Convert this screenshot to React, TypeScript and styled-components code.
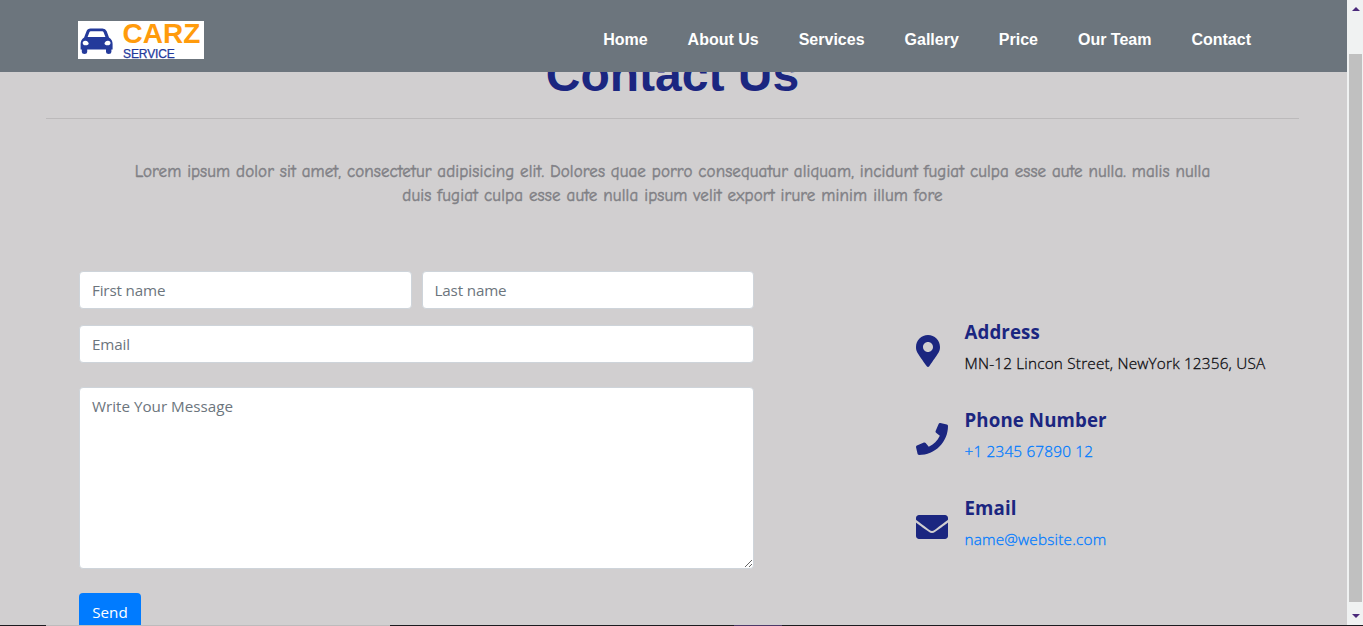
import React from "react";
import styled, { createGlobalStyle } from "styled-components";
import { FaMapMarkerAlt, FaPhone, FaEnvelope } from "react-icons/fa";

const GlobalStyle = createGlobalStyle`
  *, *::before, *::after { box-sizing: border-box; }
  body { margin: 0; overflow: hidden; font-family: "Open Sans", "Noto Sans", sans-serif; }
`;

const Window = styled.div`
  display: flex;
  flex-direction: column;
  width: 1363px;
  height: 626px;
  overflow: hidden;
  background: #d1cfd0;
`;

const Viewport = styled.div`
  display: flex;
  height: 625px;
`;

const Page = styled.div`
  position: relative;
  width: 1347px;
  height: 625px;
  overflow: hidden;
`;

const Header = styled.header`
  position: absolute;
  top: 0;
  left: 0;
  z-index: 2;
  display: flex;
  justify-content: space-between;
  align-items: center;
  width: 100%;
  height: 72px;
  padding: 8px 96px 0 78px;
  background: #6c757d;
`;

const Logo = styled.a`
  display: flex;
  width: 126px;
  height: 38px;
  padding: 0 0 0 2px;
  background: #fff;
`;

const CarMark = styled.svg`
  width: 34px;
  height: 28px;
  margin-top: 6px;
`;

const LogoText = styled.div`
  display: flex;
  flex-direction: column;
  margin-left: 8.5px;
  font-family: "Liberation Sans", sans-serif;
`;

const LogoName = styled.span`
  color: #ff9b0c;
  font-size: 28px;
  font-weight: bold;
  line-height: 25px;
`;

const LogoSub = styled.span`
  color: #243a9b;
  font-size: 12px;
  line-height: 16px;
  padding-left: 0.5px;
  letter-spacing: -0.1px;
  -webkit-text-stroke: 0.25px #243a9b;
`;

const Nav = styled.nav`
  display: flex;
  gap: 40px;
  font-family: "Liberation Sans", sans-serif;
  font-size: 16px;
  font-weight: bold;
`;

const NavLink = styled.a`
  color: #fff;
  line-height: 24px;
  white-space: nowrap;
  margin-top: -1px;
`;

const Main = styled.main`
  display: flex;
  flex-direction: column;
  padding: 47px 48px 0 46px;
`;

const Title = styled.h1`
  margin: 0;
  color: #1b2680;
  font: bold 48px/56px "Liberation Sans", sans-serif;
  text-align: center;
`;

const Rule = styled.hr`
  width: 100%;
  height: 1px;
  margin: 15px 0 0;
  border: 0;
  background: #bcbabb;
`;

const Intro = styled.p`
  margin: 41px 0 0;
  color: #808085;
  font-family: "Comic Neue", "Comic Sans MS", "Open Sans", sans-serif;
  font-size: 17px;
  line-height: 24px;
  text-align: center;
  -webkit-text-stroke: 0.45px #808085;
`;

const IntroLine = styled.span<{ $spacing: number }>`
  display: block;
  white-space: nowrap;
  letter-spacing: ${(p) => p.$spacing}px;
`;

const Columns = styled.div`
  display: flex;
  margin-top: 63px;
  padding-left: 33px;
`;

const Form = styled.form`
  display: flex;
  flex-direction: column;
  align-items: flex-start;
  width: 675px;
`;

const FieldRow = styled.div`
  display: flex;
  gap: 10px;
  width: 100%;
`;

const Input = styled.input<{ $top?: number }>`
  display: block;
  flex: 1;
  width: 100%;
  min-width: 0;
  min-height: 38px;
  margin: ${(p) => p.$top ?? 0}px 0 0;
  padding: 6px 12px;
  border: 1px solid #ced4da;
  border-radius: 4px;
  background: #fff;
  font: 15.2px/24px "Open Sans", sans-serif;
  letter-spacing: -0.15px;
  outline: none;
  &::placeholder { color: #6c757d; opacity: 1; }
`;

const Message = styled.textarea`
  display: block;
  width: 100%;
  height: 182px;
  margin: 24px 0 0;
  padding: 6px 12px;
  border: 1px solid #ced4da;
  border-radius: 4px;
  background: #fff;
  font: 15.2px/24px "Open Sans", sans-serif;
  outline: none;
  resize: vertical;
  &::placeholder { color: #6c757d; opacity: 1; }
`;

const SendButton = styled.button`
  width: 62px;
  height: 38px;
  margin-top: 24px;
  padding: 0;
  border: 0;
  border-radius: 4px;
  background: #007bff;
  color: #fff;
  font: 15.2px/24px "Open Sans", sans-serif;
`;

const Contacts = styled.div`
  display: flex;
  flex-direction: column;
  gap: 24px;
  margin: 49px 0 0 162px;
`;

const ContactItem = styled.div`
  display: flex;
  align-items: flex-start;
  height: 64px;
  color: #1b2680;
`;

const IconSlot = styled.div<{ $narrow?: boolean }>`
  display: flex;
  width: 48.5px;
  margin-top: 15px;
  padding-left: 0.4px;
  svg {
    flex: none;
    width: ${(p) => (p.$narrow ? 24 : 32)}px;
    height: 32px;
  }
`;

const Details = styled.div`
  display: flex;
  flex-direction: column;
`;

const Label = styled.h2`
  margin: 0 0 7px;
  font-size: 18.7px;
  font-weight: 700;
  line-height: 24px;
  letter-spacing: 0.1px;
`;

const Value = styled.span<{ $link?: boolean }>`
  color: ${(p) => (p.$link ? "#007bff" : "#0c0c10")};
  font-size: 15.3px;
  font-weight: 300;
  line-height: 24px;
  white-space: nowrap;
  letter-spacing: 0.2px;
  -webkit-text-stroke: 0.3px currentColor;
`;

const Scrollbar = styled.div`
  display: flex;
  flex-direction: column;
  align-items: center;
  width: 16px;
  padding-left: 1px;
  background: #f0f2f2;
`;

const Thumb = styled.div`
  width: 13px;
  height: 548px;
  background: #c0c0c0;
`;

const Arrow = styled.svg<{ $gap: string }>`
  display: block;
  width: 8px;
  height: 4px;
  margin: ${(p) => p.$gap};
`;

const BottomEdge = styled.div`
  display: flex;
  height: 1px;
`;

const EdgePart = styled.div<{ $width: number; $color: string }>`
  width: ${(p) => p.$width}px;
  background: ${(p) => p.$color};
`;

const links = ["Home", "About Us", "Services", "Gallery", "Price", "Our Team", "Contact"];

export default function App() {
  return (
    <Window>
      <GlobalStyle />
      <Viewport>
        <Page>
          <Header>
            <Logo>
              <CarMark viewBox="0 0 34 28">
                <path
                  fill="#243a9b"
                  fillRule="evenodd"
                  d="M10.500 1.500h12q3 0 4.200 2.800L29 10.500q3.600 2 3.600 6.500v5.500h-1.200V25q0 2-2.700 2t-2.700-2v-2.500H7.200V25q0 2-2.700 2T1.800 25v-2.500H.6V17q0-4.500 3.500-6.500L6.500 4.300Q7.500 1.500 10.500 1.500ZM10.800 4.200q-1 0-1.400 1L7.600 10h17.800l-1.800-4.800q-.4-1-1.400-1ZM5.500 13.800c-1.800-.2-2.800.8-2.800 2.200s1.200 2.300 3 2.300 3-.8 3-1.800-1.400-2.500-3.200-2.700ZM27.700 13.800c1.800-.2 2.800.8 2.800 2.200s-1.200 2.300-3 2.300-3-.8-3-1.800 1.400-2.500 3.200-2.700Z"
                />
              </CarMark>
              <LogoText>
                <LogoName>CARZ</LogoName>
                <LogoSub>SERVICE</LogoSub>
              </LogoText>
            </Logo>
            <Nav>
              {links.map((l) => (
                <NavLink key={l}>{l}</NavLink>
              ))}
            </Nav>
          </Header>
          <Main>
            <Title>Contact Us</Title>
            <Rule />
            <Intro>
              <IntroLine $spacing={0.1}>
                Lorem ipsum dolor sit amet, consectetur adipisicing elit. Dolores quae porro consequatur aliquam, incidunt fugiat culpa esse aute nulla. malis nulla
              </IntroLine>
              <IntroLine $spacing={0.15}>
                duis fugiat culpa esse aute nulla ipsum velit export irure minim illum fore
              </IntroLine>
            </Intro>
            <Columns>
              <Form>
                <FieldRow>
                  <Input placeholder="First name" />
                  <Input placeholder="Last name" />
                </FieldRow>
                <Input $top={16} placeholder="Email" />
                <Message placeholder="Write Your Message" />
                <SendButton type="button">Send</SendButton>
              </Form>
              <Contacts>
                <ContactItem>
                  <IconSlot $narrow><FaMapMarkerAlt /></IconSlot>
                  <Details>
                    <Label>Address</Label>
                    <Value>MN-12 Lincon Street, NewYork 12356, USA</Value>
                  </Details>
                </ContactItem>
                <ContactItem>
                  <IconSlot><FaPhone /></IconSlot>
                  <Details>
                    <Label>Phone Number</Label>
                    <Value $link>+1 2345 67890 12</Value>
                  </Details>
                </ContactItem>
                <ContactItem>
                  <IconSlot><FaEnvelope /></IconSlot>
                  <Details>
                    <Label>Email</Label>
                    <Value $link>name@website.com</Value>
                  </Details>
                </ContactItem>
              </Contacts>
            </Columns>
          </Main>
        </Page>
        <Scrollbar>
          <Arrow $gap="7px 0 43px" viewBox="0 0 8 4"><path fill="#4b2a7b" d="M0 4 4 0l4 4Z" /></Arrow>
          <Thumb />
          <Arrow $gap="12px 0 0" viewBox="0 0 8 4"><path fill="#4b2a7b" d="M0 0h8L4 4Z" /></Arrow>
        </Scrollbar>
      </Viewport>
      <BottomEdge>
        <EdgePart $width={46} $color="#1c1c20" />
        <EdgePart $width={344} $color="#bdbbbc" />
        <EdgePart $width={344} $color="#1c1c20" />
        <EdgePart $width={48} $color="#4d3a68" />
        <EdgePart $width={581} $color="#1c1c20" />
      </BottomEdge>
    </Window>
  );
}
